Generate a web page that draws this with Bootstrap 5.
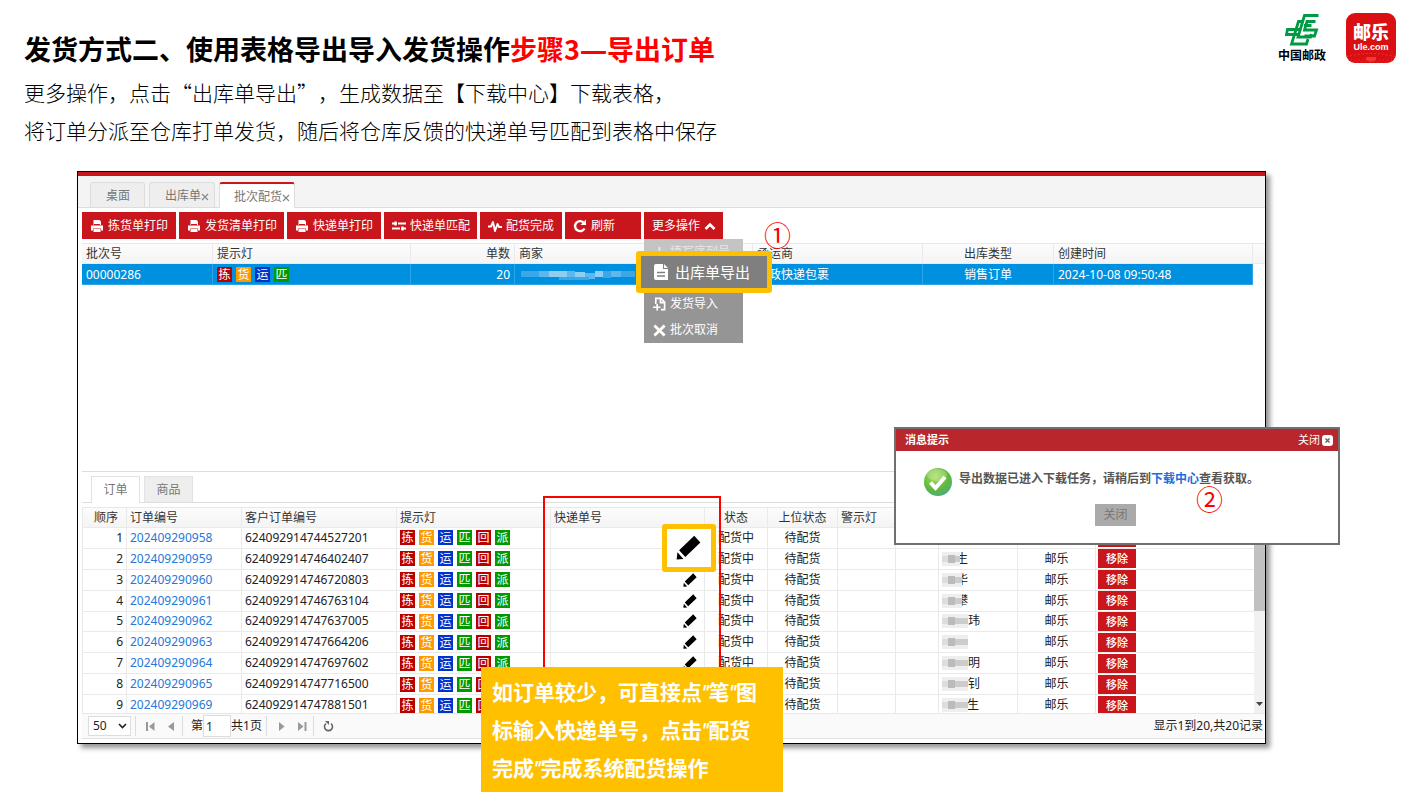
<!DOCTYPE html>
<html lang="zh-CN">
<head>
<meta charset="utf-8">
<meta name="viewport" content="width=device-width, initial-scale=1">
<title>导出订单</title>
<link href="https://cdn.jsdelivr.net/npm/bootstrap@5.3.0/dist/css/bootstrap.min.css" rel="stylesheet">
<style>
:root { --brand: #c9161d; --mark: #ffc000; }
body { font-family: "Noto Sans", "Noto Sans CJK SC", sans-serif; font-size: 12px; line-height: 20px; color: #333; background: #fff; min-height: 100vh; padding-bottom: 56px; overflow-x: hidden; }
a { text-decoration: none; }
.slide-head { padding: 29px 18px 0 24px; font-family: "Noto Sans CJK SC", sans-serif; color: #000; }
.slide-title { font-size: 27px; line-height: 40px; font-weight: 700; margin-bottom: 3px; }
.slide-title span { color: #f00; }
.slide-title i { font-style: normal; font-family: "Open Sans", sans-serif; }
.slide-text { font-size: 21px; line-height: 38px; font-weight: 300; margin: 0; text-spacing-trim: space-all; }
.logos { gap: 20px; margin-top: -16px; }
.post-logo { font-size: 12px; line-height: 16px; font-weight: 700; }
.ule-logo { width: 50px; height: 50px; border-radius: 9px; background: #d90f14; color: #fff; overflow: hidden; position: relative; text-align: center; padding-top: 8px; }
.ule-logo b { display: block; font-size: 18px; line-height: 20px; font-weight: 900; }
.ule-logo small { display: block; font: bold 9px/13px "Liberation Sans", sans-serif; }
.ule-logo svg { position: absolute; left: 0; bottom: 0; }

.shot { position: relative; margin: 22px 148px 0 77px; border: 1px solid #000; box-shadow: 4px 4px 5px rgba(0,0,0,.42); background: #fff; }
.top-bar { height: 4px; background: var(--brand); }
.tab-strip { background: #f4f4f4; height: 32px; padding: 6px 0 0 12px; gap: 4px; border-bottom: 1px solid #ddd; }
.tab-item { color: #777; background: #eee; border: 1px solid #ddd; border-bottom: 0; border-radius: 3px 3px 0 0; height: 25px; padding: 0 5px 0 15px; line-height: 25px; white-space: nowrap; }
.tab-item.current { background: #fff; border-top: 2px solid var(--brand); height: 26px; line-height: 26px; padding-left: 14px; padding-right: 4px; }
.tab-item.first { padding-right: 14px; }
.tools { gap: 3px; padding: 4px 0 4px 4px; }
.tool { background: var(--brand); color: #fff; border: 0; border-radius: 0; height: 27px; padding: 0 0 0 8px; font-size: 12px; display: flex; align-items: center; gap: 4px; white-space: nowrap; }
.tool:hover { background: #a91218; color: #fff; }
.w-a { width: 94px; } .w-b { width: 105px; } .w-c { width: 93px; } .w-d { width: 82px; } .w-e { width: 76px; } .w-f { width: 79px; }

.data { --bs-table-bg: transparent; table-layout: fixed; margin: 0; color: #333; border-collapse: separate; border-spacing: 0; font-size: 12px; }
.data > thead > tr > th { font-weight: 400; background: linear-gradient(#fcfcfc, #f4f4f4); border-top: 1px solid #e8e8e8; height: 21px; }
.data > * > tr > * { padding: 0 3px; line-height: 19px; border-bottom: 1px solid #eaeaea; border-right: 1px solid #eaeaea; white-space: nowrap; overflow: hidden; vertical-align: middle; box-shadow: none; }
.data > * > tr > *:last-child { border-right: 0; }
.batch-area { margin-left: 4px; height: 229px; border-bottom: 1px solid #ddd; }
.batch > * > tr > * { padding: 0 4px; }
.batch > tbody > tr > td { background: #0090e0; color: #fff; border-color: #2ea4e6; height: 21px; }
.batch > tbody > tr > td:last-child { background: #fff; border: 0; }
.lamps { gap: 4px; }
.lamp { width: 15px; height: 15px; color: #fff; font-size: 12px; line-height: 15px; text-align: center; overflow: hidden; }
.c-r { background: #b90000; } .c-o { background: #f90; } .c-b { background: #03c; } .c-g { background: #090; }

.sub-tabs { margin-left: 4px; padding: 4px 0 0 9px; gap: 4px; border-bottom: 1px solid #ddd; height: 31px; }
.sub-tab { width: 49px; height: 26px; line-height: 26px; text-align: center; color: #777; border: 1px solid #e2e2e2; border-bottom: 0; }
.sub-tab.current { background: #fff; height: 27px; }
.sub-tab.other { background: #eee; }
.orders-area { margin: 4px 0 0 4px; height: 206px; overflow: hidden; border-left: 1px solid #eaeaea; }
.orders { height: 209px; }
.orders > tbody > tr > td { line-height: 18px; color: #222; }
.orders td a { color: #2678da; }
.remove { display: block; margin-left: -1px; width: 38px; height: 19px; border: 0; padding: 0; background: var(--brand); color: #fff; font-size: 11px; line-height: 19px; font-weight: 500; }
.scroller { width: 11px; flex: none; background: #f1f1f1; position: relative; }
.scroller i { display: block; height: 104px; background: #c1c1c1; }
.scroller svg { position: absolute; left: 2px; bottom: 6px; }
.masked { position: relative; height: 18px; }
.masked svg { position: absolute; left: 0; top: 2px; }

.pager { margin: 0 0 4px 4px; height: 26px; background: #fafafa; border-top: 1px solid #e8e8e8; border-bottom: 1px solid #e2e2e2; padding: 0 2px 0 6px; color: #222; }
.pager select { width: 43px; height: 20px; border: 1px solid #ddd; background: #fff; font-size: 12px; line-height: 18px; padding: 0 4px; appearance: none; color: #222; }
.pager input { width: 28px; height: 22px; border: 1px solid #ddd; font-size: 12px; padding: 0 2px; color: #222; }
.pager .btn { padding: 0; border: 0; line-height: 1; display: flex; width: 21px; height: 20px; align-items: center; justify-content: center; }
.pick { position: relative; }
.pick svg { position: absolute; right: 4px; top: 7px; pointer-events: none; }
.bar { width: 1px; height: 20px; background: #ddd; }

.more-menu { position: absolute; left: 566px; top: 67px; width: 99px; background: rgba(126,126,126,.82); }
.more-menu button { display: flex; align-items: center; gap: 4px; width: 100%; height: 26px; border: 0; padding: 0 0 0 9px; background: none; color: #fff; font-size: 12px; }
.more-menu button:first-child { background: rgba(205,205,205,.85); color: #e8e8e8; }
.frame { position: absolute; border: 5px solid var(--mark); border-radius: 3px; }
.frame-export { left: 558px; top: 79px; width: 136px; height: 42px; background: #7f7f7f; color: #fff; font-size: 15px; gap: 6px; padding: 0 0 0 12px; }
.frame-pen { left: 584px; top: 352px; width: 54px; height: 48px; background: #fff; padding: 0 2px 2px 0; }
.red-frame { position: absolute; left: 465px; top: 324px; width: 178px; height: 180px; border: 2px solid #f00; }
.step-no { position: absolute; font: 27px/30px "Noto Sans CJK SC", sans-serif; color: #f00; }
.step-one { left: 686px; top: 48px; }
.step-two { right: 115px; bottom: 29px; }
.hint { position: absolute; left: 403px; top: 495px; width: 302px; margin: 0; padding: 7px 20px 4px 11px; background: var(--mark); color: #fff; font: 700 21px/38px Roboto, "Noto Sans CJK SC", sans-serif; }
.notice { position: absolute; right: -75px; top: 255px; width: 446px; height: 118px; border: 2px solid #707070; background: #fff; }
.notice-head { height: 22px; background: #b9262c; color: #fff; font-size: 11px; line-height: 22px; padding: 0 5px 0 9px; }
.notice-head button { border: 0; background: none; color: #fff; padding: 0; font-size: 11px; gap: 2px; display: flex; align-items: center; }
.notice-body { padding: 15px 0 0 27px; gap: 6px; font-weight: 700; color: #555; white-space: nowrap; line-height: 26px; }
.notice-body a { color: #1b6fe0; }
.notice-ok { display: block; margin: 6px 0 0 199px; width: 41px; height: 22px; border: 0; background: #aaa; color: #777; font-size: 12px; line-height: 22px; padding: 0; }
</style>
</head>
<body>
<svg width="0" height="0" class="position-absolute" aria-hidden="true">
  <symbol id="i-print" viewBox="0 0 14 14"><path fill="currentColor" d="M3.500 1h6l1.500 1.500V6H3.500zM1 6.500h12v5h-2V9.500H3v2H1zM3.500 10h7v3h-7z"/><path stroke="#c9161d" d="M4 5.500h6"/><path fill="currentColor" d="M1 7h12v2H1z"/></symbol>
  <symbol id="i-match" viewBox="0 0 14 14"><path stroke="currentColor" stroke-width="1.800" d="M0 4.500h14M0 9.500h14"/><path stroke="currentColor" stroke-width="2.400" d="M3.500 2.500v4M10.500 7.500v4"/><path stroke="#c9161d" stroke-width="1" d="M5.500 3v3M8.500 8v3"/></symbol>
  <symbol id="i-pulse" viewBox="0 0 14 14"><path fill="none" stroke="currentColor" stroke-width="1.900" stroke-linejoin="round" d="M0 7.500h3L5 3l2 9 2.500-7 1.500 3h3"/></symbol>
  <symbol id="i-refresh" viewBox="0 0 14 14"><path fill="none" stroke="currentColor" stroke-width="2.400" d="M11.500 9.500A5 5 0 1 1 10.500 3.500"/><path fill="currentColor" d="M13 .5v5.500H7.500z"/></symbol>
  <symbol id="i-doc" viewBox="0 0 16 18"><path fill="currentColor" d="M3 1h7v5h5v11H3a2 2 0 0 1-2-2V3a2 2 0 0 1 2-2zM11 1l4 4h-4z"/><path stroke="#7f7f7f" stroke-width="1.300" d="M4 9.500h8M4 13h8"/></symbol>
  <symbol id="i-import" viewBox="0 0 14 14"><path fill="none" stroke="currentColor" stroke-width="1.800" d="M3 7V1h5.500L12.500 5v8H8.500M8 1v4.500h4"/><path stroke="currentColor" stroke-width="1.800" d="M0 10.500h8M4.500 7v7"/></symbol>
  <symbol id="i-cross" viewBox="0 0 14 14"><path stroke="currentColor" stroke-width="3" d="M1.500 1.500l11 11M12.500 1.500l-11 11"/></symbol>
  <symbol id="i-pen" viewBox="0 0 24 24"><path d="M17.500.6l5.900 6.500L8.900 21 3 14.600zM1.400 16.600l5.800 6.400-6.600.4z"/></symbol>
  <symbol id="i-x" viewBox="0 0 8 8"><path stroke="#888" stroke-width="1.200" d="M1 1l6 6M7 1L1 7"/></symbol>
</svg>

<header class="slide-head d-flex justify-content-between align-items-start">
  <div>
    <h1 class="slide-title">发货方式二、使用表格导出导入发货操作<span>步骤3<i>—</i>导出订单</span></h1>
    <p class="slide-text">更多操作，点击“出库单导出”，生成数据至【下载中心】下载表格，<br>将订单分派至仓库打单发货，随后将仓库反馈的快递单号匹配到表格中保存</p>
  </div>
  <div class="logos d-flex">
    <div class="post-logo text-center">
      <svg class="d-block mx-auto" width="34" height="34" viewBox="0 0 34 34"><g fill="none" stroke="#009944" stroke-width="2.800"><path d="M33.500 2.500H19.500L13 24H25.500L26.500 21"/><path d="M30.500 8.500H22L19.500 17H31.500L29.500 23H19.500"/><path d="M18 8.500H13.500L6.500 31H21.500L23 26"/><path d="M16 16.500H2.500L1.500 21.500H13M19 12.500H26.500"/></g></svg>
      <div>中国邮政</div>
    </div>
    <div class="ule-logo"><b>邮乐</b><small>Ule.com</small>
      <svg width="50" height="10" viewBox="0 0 50 10"><path d="M0 4Q25-3 50 4" fill="none" stroke="#e63a38" stroke-dasharray="2 2"/><path d="M1 7h48M3 9h44" stroke="#e63a38" stroke-dasharray="1 3"/><path d="M20 4h10v3l-5 2-5-2z" fill="#ec3a34"/></svg>
    </div>
  </div>
</header>

<main class="shot">
  <div class="top-bar"></div>
  <nav class="tab-strip d-flex">
    <a href="#" class="tab-item first">桌面</a>
    <a href="#" class="tab-item">出库单<svg class="align-middle" width="8" height="8"><use href="#i-x"/></svg></a>
    <a href="#" class="tab-item current">批次配货<svg class="align-middle" width="8" height="8"><use href="#i-x"/></svg></a>
  </nav>
  <div class="tools d-flex">
    <button class="tool w-a"><svg width="14" height="14"><use href="#i-print"/></svg>拣货单打印</button>
    <button class="tool w-b"><svg width="14" height="14"><use href="#i-print"/></svg>发货清单打印</button>
    <button class="tool w-a"><svg width="14" height="14"><use href="#i-print"/></svg>快递单打印</button>
    <button class="tool w-c"><svg width="14" height="14"><use href="#i-match"/></svg>快递单匹配</button>
    <button class="tool w-d"><svg width="14" height="14"><use href="#i-pulse"/></svg>配货完成</button>
    <button class="tool w-e"><svg width="14" height="14"><use href="#i-refresh"/></svg>刷新</button>
    <button class="tool w-f">更多操作<svg width="12" height="12" viewBox="0 0 12 12"><path d="M1.500 9L6 4.500 10.500 9" fill="none" stroke="#fff" stroke-width="2.600"/></svg></button>
  </div>

  <div class="batch-area">
    <table class="table data batch">
      <colgroup><col style="width:131px"><col style="width:198px"><col style="width:104px"><col style="width:238px"><col style="width:170px"><col style="width:131px"><col><col style="width:12px"></colgroup>
      <thead><tr><th>批次号</th><th>提示灯</th><th class="text-end">单数</th><th>商家</th><th>承运商</th><th class="text-center">出库类型</th><th>创建时间</th><th></th></tr></thead>
      <tbody><tr>
        <td>00000286</td>
        <td><div class="lamps d-flex"><span class="lamp c-r">拣</span><span class="lamp c-o">货</span><span class="lamp c-b">运</span><span class="lamp c-g">匹</span></div></td>
        <td class="text-end">20</td>
        <td><svg class="d-block" width="120" height="14"><g fill="#5fb8ec"><path d="M2 4h18v6H2z" opacity=".6"/><path d="M20 4h10v6H20zM48 4h8v6h-8zM66 6h10v6H66zM92 4h10v6H92z"/></g><g fill="#8fcdf2"><path d="M30 4h18v6H30zM56 5h10v6H56zM76 4h8v6h-8z"/></g><path fill="#3ba7e5" d="M40 10h30v3H40zM84 4h8v7h-8zM102 4h14v6h-14z"/></svg></td>
        <td>邮政快递包裹</td><td class="text-center">销售订单</td><td>2024-10-08 09:50:48</td><td></td>
      </tr></tbody>
    </table>
  </div>

  <nav class="sub-tabs d-flex"><a href="#" class="sub-tab current">订单</a><a href="#" class="sub-tab other">商品</a></nav>

  <div class="orders-area d-flex">
    <table class="table data orders flex-fill">
      <colgroup><col style="width:44px"><col style="width:115px"><col style="width:155px"><col style="width:154px"><col style="width:154px"><col style="width:63px"><col style="width:70px"><col style="width:58px"><col style="width:43px"><col style="width:79px"><col style="width:78px"><col></colgroup>
      <thead><tr><th class="text-end pe-2">顺序</th><th>订单编号</th><th>客户订单编号</th><th>提示灯</th><th>快递单号</th><th class="text-center">状态</th><th class="text-center">上位状态</th><th>警示灯</th><th></th><th>收货人</th><th>平台</th><th>操作</th></tr></thead>
      <tbody id="orderRows"></tbody>
    </table>
    <div class="scroller"><i></i><svg width="7" height="5"><path d="M0 0h7L3.500 4z" fill="#444"/></svg></div>
  </div>

  <div class="pager d-flex align-items-center">
    <div class="pick"><select aria-label="每页条数"><option>50</option></select><svg width="9" height="6"><path d="M1 1l3.500 3.500L8 1" fill="none" stroke="#222" stroke-width="1.600"/></svg></div>
    <span class="bar ms-1"></span>
    <button class="btn ms-1" aria-label="首页"><svg width="9" height="9"><path d="M0 0h2v9H0zM8.500 0v9L3 4.500z" fill="#999"/></svg></button>
    <button class="btn" aria-label="上一页"><svg width="7" height="9"><path d="M6 0v9L0 4.500z" fill="#999"/></svg></button>
    <span class="bar"></span>
    <label class="d-flex align-items-center ms-2">第<input class="mx-0" value="1" aria-label="页码">共1页</label>
    <span class="bar ms-1"></span>
    <button class="btn ms-1" aria-label="下一页"><svg width="7" height="9"><path d="M1 0v9l5.500-4.500z" fill="#999"/></svg></button>
    <button class="btn" aria-label="末页"><svg width="9" height="9"><path d="M6.500 0h2v9h-2zM0 0v9l5.500-4.500z" fill="#999"/></svg></button>
    <span class="bar"></span>
    <button class="btn ms-1" aria-label="刷新"><svg width="11" height="11"><path d="M3 2.500a4 4 0 1 0 5 0" fill="none" stroke="#666" stroke-width="1.600"/><path d="M2 0h4v4z" fill="#666"/></svg></button>
    <span class="ms-auto">显示1到20,共20记录</span>
  </div>

  <div class="more-menu">
    <button><svg width="13" height="13" viewBox="0 0 14 14"><path stroke="currentColor" stroke-width="2" d="M7 1v12M1 7h12"/></svg>填写序列号</button>
    <button><svg width="13" height="13"><use href="#i-doc"/></svg>出库单导出</button>
    <button><svg width="13" height="14"><use href="#i-import"/></svg>发货导入</button>
    <button><svg width="13" height="13"><use href="#i-cross"/></svg>批次取消</button>
  </div>
  <div class="red-frame"></div>
  <button class="frame frame-export d-flex align-items-center"><svg width="16" height="18"><use href="#i-doc"/></svg>出库单导出</button>
  <button class="frame frame-pen d-flex align-items-center justify-content-center" aria-label="编辑快递单号"><svg width="25" height="25"><use href="#i-pen"/></svg></button>
  <span class="step-no step-one">①</span>
  <p class="hint">如订单较少，可直接点<i>"</i>笔<i>"</i>图标输入快递单号，点击<i>"</i>配货完成<i>"</i>完成系统配货操作</p>

  <section class="notice">
    <div class="notice-head d-flex justify-content-between"><b>消息提示</b>
      <button>关闭<svg width="11" height="11"><rect width="11" height="11" rx="3" fill="#fff"/><path d="M3.500 3.500l4 4M7.500 3.500l-4 4" stroke="#666" stroke-width="1.500"/></svg></button></div>
    <div class="notice-body d-flex">
      <svg width="30" height="32" viewBox="0 0 30 32"><defs><radialGradient id="ok" cx=".4" cy=".3" r=".8"><stop stop-color="#a6e05a"/><stop offset=".6" stop-color="#5fb83c"/><stop offset="1" stop-color="#4aa89a"/></radialGradient></defs><circle cx="15" cy="16" r="14" fill="url(#ok)"/><ellipse cx="14" cy="9" rx="10" ry="6" fill="#fff" opacity=".22"/><path d="M7.500 16.500l5 5.500L22 11" fill="none" stroke="#fff" stroke-width="4"/></svg>
      <span>导出数据已进入下载任务，请稍后到<a href="#">下载中心</a>查看获取。</span>
    </div>
    <button class="notice-ok">关闭</button>
    <span class="step-no step-two">②</span>
  </section>
</main>

<script>
// Each order: number, customer number, masked width of the recipient, visible end of the name, its left offset
const orders = [
  ['202409290958', '624092914744527201', 20, '', 14],
  ['202409290959', '624092914746402407', 18, '生', 14],
  ['202409290960', '624092914746720803', 20, '华', 14],
  ['202409290961', '624092914746763104', 20, '攀', 14],
  ['202409290962', '624092914747637005', 26, '玮', 26],
  ['202409290963', '624092914747664206', 26, '', 26],
  ['202409290964', '624092914747697602', 26, '明', 26],
  ['202409290965', '624092914747716500', 26, '钊', 26],
  ['202409290969', '624092914747881501', 26, '生', 25]
];
const lamps = [['拣', 'r'], ['货', 'o'], ['运', 'b'], ['匹', 'g'], ['回', 'r'], ['派', 'g']]
  .map(([t, c]) => `<span class="lamp c-${c}">${t}</span>`).join('');
const mask = w => `<svg width="${w}" height="14"><rect width="${w}" height="14" fill="#eee"/><path d="M0 4h6v6H0z" fill="#ddd"/><path d="M6 3h7v8H6z" fill="#bbb"/><path d="M13 4h${w - 13}v6H13z" fill="#ccc"/></svg>`;
document.getElementById('orderRows').innerHTML = orders.map(([no, cust, w, name, left], i) => `<tr>
  <td class="text-end">${i + 1}</td><td><a href="#">${no}</a></td><td>${cust}</td>
  <td><div class="lamps d-flex">${lamps}</div></td>
  <td><svg class="d-block ms-auto me-1" width="14" height="14"><use href="#i-pen"/></svg></td>
  <td class="text-center">配货中</td><td class="text-center">待配货</td><td></td><td></td>
  <td><div class="masked" style="padding-left:${left}px">${name}${mask(w)}</div></td>
  <td class="text-center">邮乐</td><td><button class="remove">移除</button></td></tr>`).join('');
</script>
<script src="https://cdn.jsdelivr.net/npm/bootstrap@5.3.0/dist/js/bootstrap.bundle.min.js"></script>
</body>
</html>
